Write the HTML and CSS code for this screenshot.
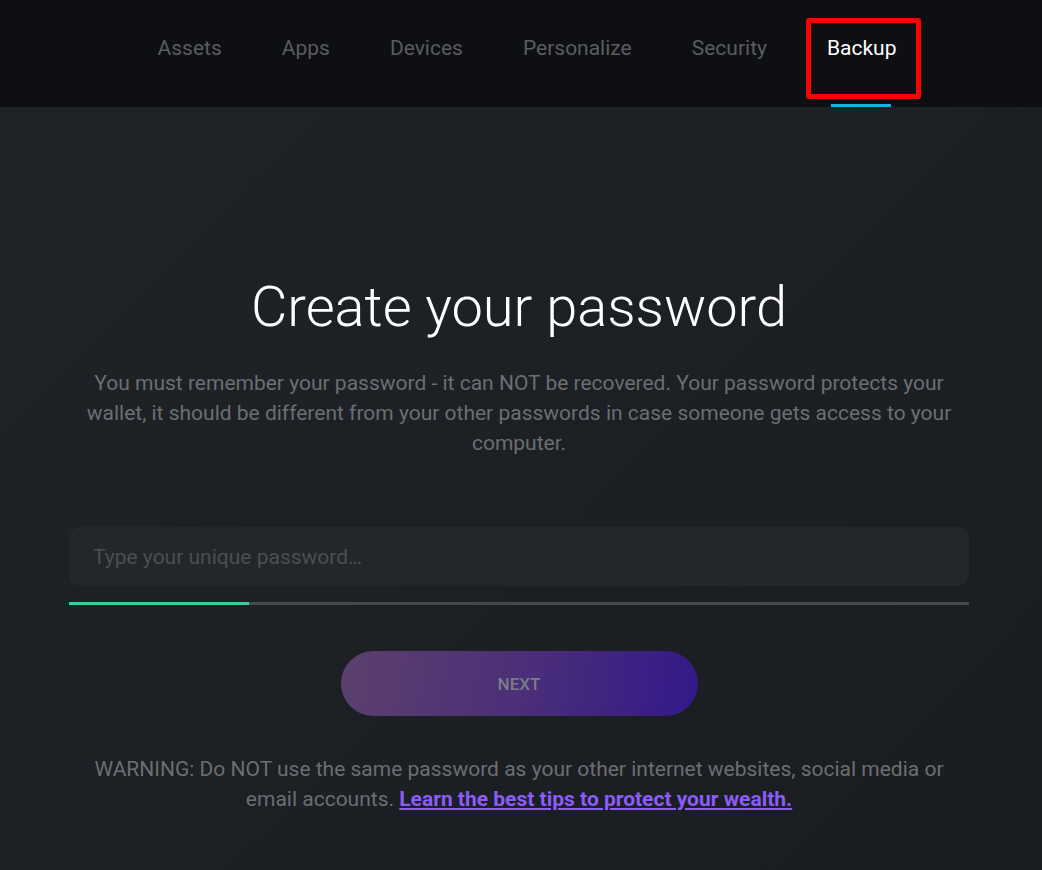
FILE: index.html
```html
<!DOCTYPE html>
<html lang="en">
<head>
    <meta charset="UTF-8">
    <meta name="viewport" content="width=device-width, initial-scale=1.0">
    <title>Backup - Create your password</title>
    <link rel="stylesheet" href="styles.css">
</head>
<body>
    <nav class="top-nav">
        <a class="nav-link" href="#">Assets</a>
        <a class="nav-link" href="#">Apps</a>
        <a class="nav-link" href="#">Devices</a>
        <a class="nav-link" href="#">Personalize</a>
        <a class="nav-link" href="#">Security</a>
        <a class="nav-link active" href="#">Backup<span class="highlight-box"></span></a>
    </nav>

    <main class="backup-page">
        <div class="backup-content">
            <h1 class="page-title">Create your password</h1>
            <p class="intro-text">You must remember your password - it can NOT be recovered. Your password protects your wallet, it should be different from your other passwords in case someone gets access to your computer.</p>

            <input type="password" id="password-input" class="password-input" placeholder="Type your unique password…">
            <div class="strength-bar">
                <div class="strength-fill" style="width: 20%"></div>
            </div>

            <button class="next-btn" disabled>NEXT</button>

            <p class="warning-text">WARNING: Do NOT use the same password as your other internet websites, social media or email accounts. <a href="#" class="tips-link">Learn the best tips to protect your wealth.</a></p>
        </div>
    </main>
</body>
</html>
```

FILE: styles.css
```css
body {
    margin: 0;
    font-family: Roboto, "Noto Sans", sans-serif;
    background-color: #1d2024;
    color: #ffffff;
    overflow: hidden;
}

.top-nav {
    display: flex;
    justify-content: center;
    align-items: stretch;
    gap: 60px;
    height: 107px;
    padding-left: 12px;
    background-color: #0e0f12;
}

.nav-link {
    position: relative;
    display: flex;
    align-items: center;
    padding-bottom: 11px;
    font-size: 21px;
    color: #595c60;
    text-decoration: none;
}

.nav-link.active {
    color: #ffffff;
}

.nav-link.active::after {
    content: "";
    position: absolute;
    left: 4px;
    right: 5px;
    bottom: 0;
    height: 3px;
    background-color: #12b3e8;
}

/* red annotation frame around the active tab */
.highlight-box {
    position: absolute;
    top: 18px;
    left: -21px;
    right: -25px;
    height: 71px;
    border: 5px solid #ff0000;
    border-radius: 3px;
}

.backup-page {
    height: 763px;
    padding-right: 4px;
    background: linear-gradient(135deg, #1f2327 0%, #1c1f23 55%, #1a1d20 100%);
}

.backup-content {
    width: 900px;
    margin: 0 auto;
    padding-top: 166px;
    text-align: center;
}

.page-title {
    margin: 0;
    font-size: 56px;
    font-weight: 300;
    line-height: 68px;
    color: #ffffff;
}

.intro-text {
    margin: 27px 0 0;
    font-size: 21px;
    line-height: 30px;
    color: #6b6e72;
}

.password-input {
    display: block;
    box-sizing: border-box;
    width: 100%;
    height: 59px;
    margin-top: 69px;
    padding: 0 24px;
    border: none;
    border-radius: 12px;
    background-color: #23272b;
    font-family: Roboto, sans-serif;
    font-size: 21px;
    color: #ffffff;
    outline: none;
}

.password-input::placeholder {
    color: #4b4e53;
}

.strength-bar {
    height: 3px;
    margin-top: 16px;
    background-color: #48494d;
}

.strength-fill {
    height: 100%;
    background-color: #3ccf98;
}

.next-btn {
    display: block;
    width: 357px;
    height: 65px;
    margin: 46px auto 0;
    border: none;
    border-radius: 33px;
    background: linear-gradient(100deg, #5c406d 0%, #4b2f78 50%, #34188a 100%);
    font-family: Roboto, sans-serif;
    font-size: 17px;
    font-weight: 500;
    color: #7c7c84;
    cursor: pointer;
}

.warning-text {
    margin: 38px 0 0;
    padding: 0 6px;
    font-size: 21px;
    line-height: 30px;
    color: #6b6e72;
}

.tips-link {
    font-weight: 700;
    color: #8b5cf6;
    text-decoration: underline;
}
```
